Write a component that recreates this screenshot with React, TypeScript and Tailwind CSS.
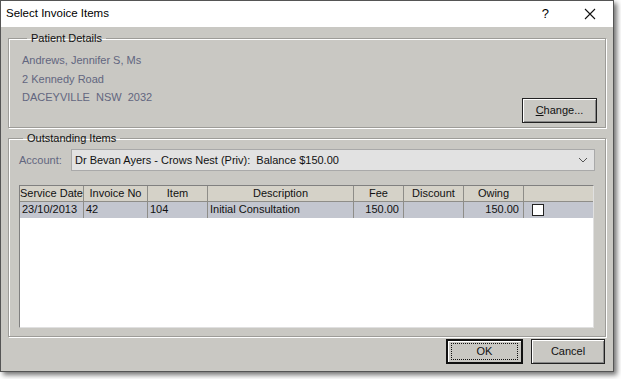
import React from "react";

const COLS = [
  { label: "Service Date", w: "w-[64px]", align: "text-left" },
  { label: "Invoice No", w: "w-[64px]", align: "text-left" },
  { label: "Item", w: "w-[60px]", align: "text-left" },
  { label: "Description", w: "w-[146px]", align: "text-left" },
  { label: "Fee", w: "w-[50px]", align: "text-right" },
  { label: "Discount", w: "w-[60px]", align: "text-right" },
  { label: "Owing", w: "w-[60px]", align: "text-right" },
];

const ROW = ["23/10/2013", "42", "104", "Initial Consultation", "150.00", "", "150.00"];

function Btn({ children, def }: { children: React.ReactNode; def?: boolean }) {
  return (
    <button
      className={`h-[25px] w-full bg-[#c9c8c3] text-[#111] ${
        def
          ? "border-2 border-[#111] shadow-[inset_1px_1px_0_#fff]"
          : "border border-[#222] shadow-[inset_1px_1px_0_#fff,inset_-1px_-1px_0_#888]"
      } flex items-center justify-center`}
    >
      {def ? (
        <span className="flex h-[17px] w-[67px] items-center justify-center border border-dotted border-[#111]">
          {children}
        </span>
      ) : (
        children
      )}
    </button>
  );
}

export default function App() {
  return (
    <div className="h-[379px] w-[621px] bg-white font-['Liberation_Sans',Arial,sans-serif] text-[11px]">
      <div className="flex h-[372px] w-[614px] flex-col border border-[#555] bg-[#c9c8c3] shadow-[3px_3px_5px_rgba(0,0,0,0.55)]">
        {/* Title bar */}
        <div className="flex h-[26px] items-center bg-white pl-[5px] text-[11.5px] text-black">
          <span>Select Invoice Items</span>
          <span className="ml-auto mr-[35px] text-[13px]">?</span>
          <svg width="12" height="12" viewBox="0 0 12 12" className="mr-[17px]">
            <path d="M1 1L11 11M11 1L1 11" stroke="#111" strokeWidth="1.1" />
          </svg>
        </div>

        <div className="flex flex-1 flex-col px-[7px]">
          {/* Patient details */}
          <fieldset className="mt-[4px] h-[97px] border border-[#9d9c98] pl-[13px] pr-[8px] shadow-[1px_1px_0_#fff,inset_1px_1px_0_#fff]">
            <legend className="ml-[5px] px-[4px] leading-[14px] text-[#111]">Patient Details</legend>
            <div className="flex h-[82px]">
              <div className="flex flex-col pt-[6px] leading-[18.5px] text-[#62667f]">
                <span>Andrews, Jennifer S, Ms</span>
                <span>2 Kennedy Road</span>
                <span>DACEYVILLE&nbsp; NSW&nbsp; 2032</span>
              </div>
              <div className="ml-auto flex flex-col justify-end pb-[4px]">
                <button className="h-[25px] w-[75px] border border-[#222] bg-[#c9c8c3] text-[#111] shadow-[inset_1px_1px_0_#fff,inset_-1px_-1px_0_#888]">
                  <span className="underline">C</span>hange...
                </button>
              </div>
            </div>
          </fieldset>

          {/* Outstanding items */}
          <fieldset className="mt-[3px] flex h-[206px] flex-col border border-[#9d9c98] pl-[10px] pr-[9px] shadow-[1px_1px_0_#fff,inset_1px_1px_0_#fff]">
            <legend className="ml-[4px] px-[4px] leading-[14px] text-[#111]">Outstanding Items</legend>
            <div className="mt-[4px] flex items-center">
              <span className="w-[52px] text-[#62667f]">Account:</span>
              <div className="flex h-[22px] w-[524px] items-center border border-[#a9a9a9] bg-[#e2e2e2] pl-[3px] pr-[6px] text-[#111]">
                <span>Dr Bevan Ayers - Crows Nest (Priv):&nbsp; Balance $150.00</span>
                <svg width="10" height="6" viewBox="0 0 10 6" className="ml-auto">
                  <path d="M1 1L5 5L9 1" fill="none" stroke="#555" strokeWidth="1" />
                </svg>
              </div>
            </div>

            <div className="mt-[14px] h-[143px] w-[575px] border border-[#808080] border-r-[#e0e0e0] border-b-[#e0e0e0] bg-white text-[#111]">
              <div className="flex h-[16px] bg-[#d5d2c8] leading-[15px]">
                {COLS.map((c) => (
                  <div key={c.label} className={`${c.w} shrink-0 whitespace-nowrap border-r border-b border-[#8e8d88] text-center`}>
                    {c.label}
                  </div>
                ))}
                <div className="flex-1 border-b border-[#8e8d88]" />
              </div>
              <div className="flex h-[16px] bg-[#c3c6cf] leading-[15px]">
                {ROW.map((v, i) => (
                  <div key={i} className={`${COLS[i].w} ${COLS[i].align} shrink-0 whitespace-nowrap border-r border-[#8e8d88] pl-[2px] pr-[4px]`}>
                    {v}
                  </div>
                ))}
                <div className="flex flex-1 items-center pl-[8px]">
                  <span className="h-[12px] w-[12px] border border-[#222] bg-white" />
                </div>
              </div>
            </div>
          </fieldset>

          {/* Buttons */}
          <div className="mt-[2px] flex justify-end gap-[8px] pr-[1px]">
            <div className="w-[77px]">
              <Btn def>
                <span>OK</span>
              </Btn>
            </div>
            <div className="w-[74px]">
              <Btn>
                <span>Cancel</span>
              </Btn>
            </div>
          </div>
        </div>
      </div>
    </div>
  );
}
